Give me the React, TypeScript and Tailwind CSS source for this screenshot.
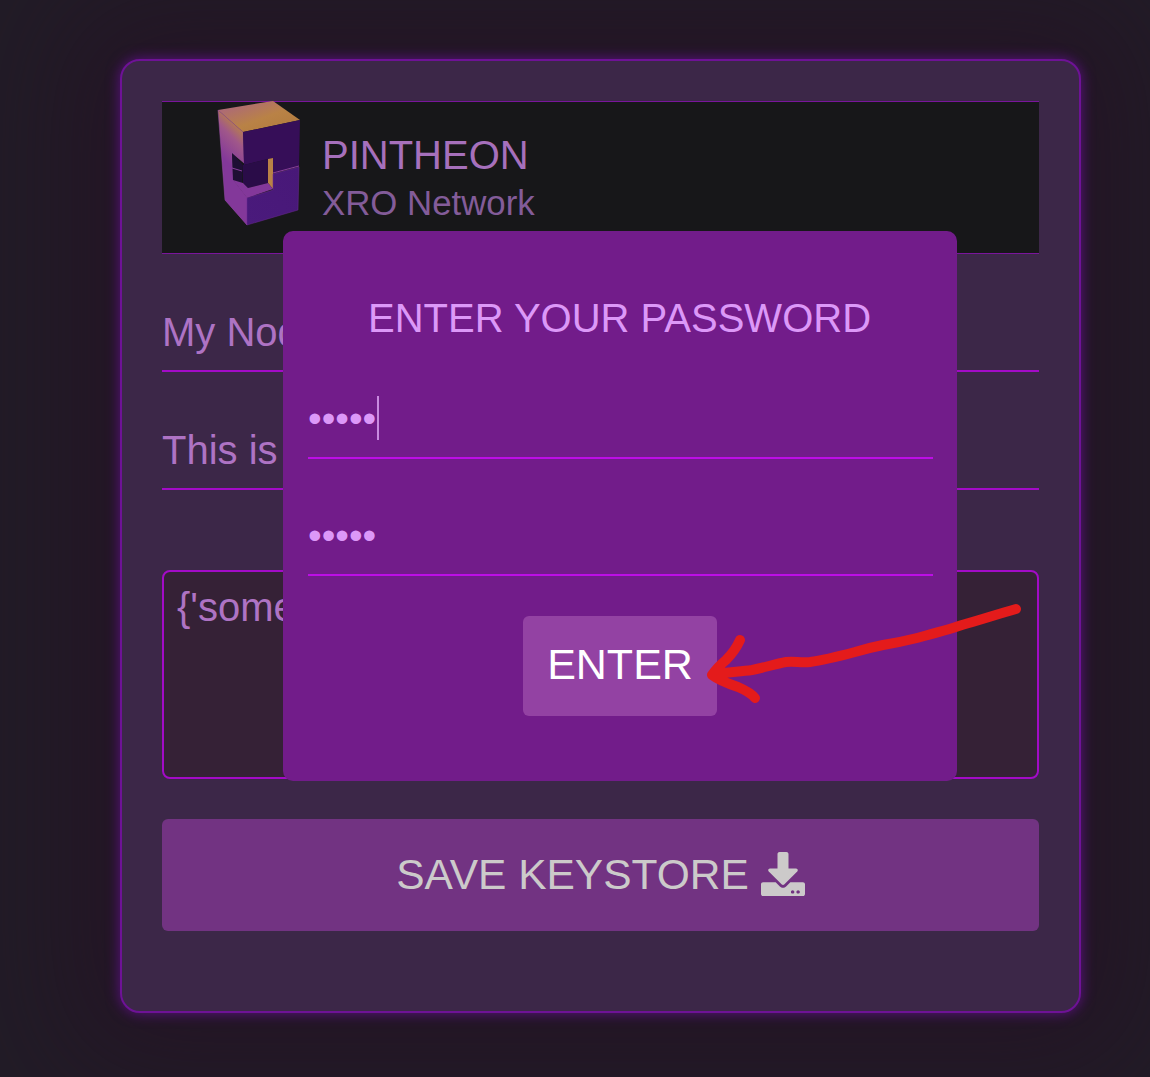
import { FaDownload } from "react-icons/fa";

function Logo() {
  return (
    <svg viewBox="0 0 110 135" className="h-[135px] w-[110px]" aria-hidden="true">
      <defs>
        <linearGradient id="top" x1="0" y1="0" x2="1" y2="1">
          <stop offset="0" stopColor="#a8608a" />
          <stop offset="0.55" stopColor="#b98246" />
          <stop offset="1" stopColor="#b07a3c" />
        </linearGradient>
        <linearGradient id="left" gradientUnits="userSpaceOnUse" x1="20" y1="60" x2="45" y2="35">
          <stop offset="0" stopColor="#83389a" />
          <stop offset="0.6" stopColor="#a0578a" />
          <stop offset="1" stopColor="#b98246" />
        </linearGradient>
        <linearGradient id="lower" x1="0" y1="1" x2="1" y2="0">
          <stop offset="0" stopColor="#4a1a7c" />
          <stop offset="1" stopColor="#481878" />
        </linearGradient>
      </defs>
      <polygon points="18,15 73,6 100,25 43,37" fill="url(#top)" />
      <polygon points="18,15 43,37 44,68 32,58 33,85 47,103 47,130 25,105" fill="url(#left)" stroke="#9a4fa8" strokeWidth="0.5" />
      <polygon points="33,85 47,103 47,130 25,105 24,70 32,72" fill="#83389a" />
      <polygon points="43,37 100,25 99,71 73,78 73,63 44,70" fill="#360e58" />
      <polygon points="32,58 43,70 42,88 33,85" fill="#1f0f35" />
      <polygon points="43,70 68,64 68,88 48,93 43,88" fill="#2a0c48" />
      <polygon points="68,64 73,63 73,94 68,88" fill="#b98246" />
      <polygon points="33,85 43,88 48,93 68,88 73,94 47,103" fill="#83389a" />
      <polygon points="47,103 73,95 73,79 99,72 98,115 47,130" fill="url(#lower)" stroke="#6a2a90" strokeWidth="0.5" />
      <line x1="73" y1="78" x2="99" y2="71" stroke="#8a3f9c" strokeWidth="1" />
      <line x1="32" y1="73" x2="42" y2="76" stroke="#8a3f9c" strokeWidth="1" />
    </svg>
  );
}

function Field({ text }: { text: string }) {
  return (
    <div className="mt-[40px] flex h-[78px] items-center border-b-2 border-[#a30bc7] text-[40px] leading-none text-[#ae73c4]">
      {text}
    </div>
  );
}

function PasswordRow({ caret }: { caret?: boolean }) {
  return (
    <div className="mt-[39px] flex h-[78px] items-center border-b-2 border-[#bd0ee6] pb-[2px] text-[39px] leading-none text-[#dc98f8]">
      <span>•••••</span>
      {caret && <span className="ml-[1px] h-[44px] w-[2px] bg-[#c98ae0]" />}
    </div>
  );
}

export default function App() {
  return (
    <div className="min-h-[1077px] bg-[#221c27] pl-[120px] pt-[59px] font-['Liberation_Sans',Arial,sans-serif]">
      <div className="relative h-[954px] w-[961px] rounded-[20px] border-2 border-[#6e1296] bg-[#3c2748] p-[40px] shadow-[0_0_14px_#5c1185,0_0_110px_50px_rgba(38,14,36,0.5)]">
        <div className="flex h-[153px] border-y border-[#7a159c] bg-[#171719] pl-[38px]">
          <div className="mt-[-7px] h-[135px] w-[110px]">
            <Logo />
          </div>
          <div className="ml-[12px] pt-[28px]">
            <div className="text-[40px] leading-[50px] text-[#a670bc]">PINTHEON</div>
            <div className="text-[34.8px] leading-[46px] text-[#835c99]">XRO Network</div>
          </div>
        </div>
        <Field text="My Node" />
        <Field text="This is a test" />
        <div className="mt-[80px] h-[209px] rounded-[8px] border-2 border-[#a30bc7] bg-[#352136] px-[13px] pt-[12px] text-[40px] leading-[46px] text-[#ae73c4]">
          {"{'some': 'json'}"}
        </div>
        <div className="mt-[40px] flex h-[112px] items-center justify-center gap-[12px] rounded-[6px] bg-[#723382] text-[42.5px] text-[#cccaca]">
          <span>SAVE KEYSTORE</span>
          <FaDownload className="mt-[-2px] h-[44px] w-[44px]" />
        </div>

        <div className="absolute left-[161px] top-[170px] h-[550px] w-[674px] rounded-[10px] bg-[#721c8a] pl-[25px] pr-[24px] pt-[60px]">
          <div className="ml-[-2px] text-center text-[40px] leading-[54px] text-[#dc98f8]">ENTER YOUR PASSWORD</div>
          <div className="mt-[-3px]">
            <PasswordRow caret />
            <PasswordRow />
          </div>
          <div className="mt-[40px] ml-[-1px] flex justify-center">
            <div className="flex h-[100px] w-[194px] items-center justify-center rounded-[6px] bg-[#9342a3] pb-[3px] text-[43px] text-white">
              ENTER
            </div>
          </div>
        </div>

        <svg className="pointer-events-none absolute left-[-122px] top-[-61px] h-[1077px] w-[1150px]" viewBox="0 0 1150 1077" fill="none" aria-hidden="true">
          <path
            d="M1016 609 C 998 614 980 620 962 625 C 947 630 932 634 917 638 C 905 641 895 643 883 645 C 873 647 865 649 855 652 C 840 656 825 660 810 662 C 800 663 795 661 786 662 C 775 664 763 668 752 670 C 738 672 725 672 712 675 M740 640 C 736 649 731 655 726 660 C 720 665 716 669 712 675 C 720 681 729 684 738 687 C 745 690 751 693 755 698"
            stroke="#e41b1b"
            strokeWidth="10"
            strokeLinecap="round"
            strokeLinejoin="round"
          />
        </svg>
      </div>
    </div>
  );
}
